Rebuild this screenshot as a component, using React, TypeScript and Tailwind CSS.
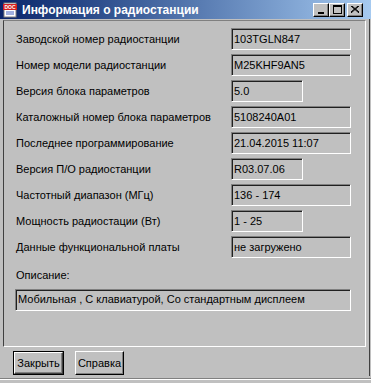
import type { ReactNode } from "react";

type Row = { label: string; value: string; wide: boolean };

const rows: Row[] = [
  { label: "Заводской номер радиостанции", value: "103TGLN847", wide: true },
  { label: "Номер модели радиостанции", value: "M25KHF9AN5", wide: true },
  { label: "Версия блока параметров", value: "5.0", wide: false },
  { label: "Каталожный номер блока параметров", value: "5108240A01", wide: true },
  { label: "Последнее программирование", value: "21.04.2015 11:07", wide: true },
  { label: "Версия П/О радиостанции", value: "R03.07.06", wide: false },
  { label: "Частотный диапазон (МГц)", value: "136 - 174", wide: true },
  { label: "Мощность радиостации (Вт)", value: "1 - 25", wide: false },
  { label: "Данные функциональной платы", value: "не загружено", wide: true },
];

// sunken read-only field, classic 3D look
function Field({ children, className }: { children: ReactNode; className?: string }) {
  return (
    <div
      className={`flex h-[22px] items-center border border-t-[#808080] border-l-[#808080] border-r-white border-b-white pl-[2px] shadow-[inset_1px_1px_0_#202020] text-[11px] text-black whitespace-nowrap ${className ?? ""}`}
    >
      {children}
    </div>
  );
}

function CaptionButton({ children }: { children: ReactNode }) {
  return (
    <div className="flex h-[14px] w-[16px] items-center justify-center bg-[#c0c0c0] border border-t-white border-l-white border-r-black border-b-black shadow-[inset_-1px_-1px_0_#808080]">
      {children}
    </div>
  );
}

function DocIcon() {
  return (
    <svg width="16" height="16" viewBox="0 0 16 16">
      <rect x="2" y="1" width="12" height="14" fill="#ffffff" stroke="#808080" />
      <rect x="1" y="2" width="14" height="6" fill="#d42020" />
      <text x="8" y="7" fontSize="5" fontWeight="bold" fill="#ffffff" textAnchor="middle" fontFamily="Liberation Sans, sans-serif">
        DOC
      </text>
      <line x1="4" y1="10" x2="12" y2="10" stroke="#4060c0" />
      <line x1="4" y1="12" x2="12" y2="12" stroke="#4060c0" />
    </svg>
  );
}

export default function App() {
  return (
    <div className="flex h-[383px] w-[371px] flex-col overflow-hidden bg-[#c0c0c0] font-['Liberation_Sans',Arial,sans-serif] select-none">
      {/* Title bar */}
      <div className="flex h-[19px] items-center bg-gradient-to-r from-[#0a246a] to-[#a6caf0] pl-[2px] pr-[8px]">
        <DocIcon />
        <span className="ml-[4px] text-[12px] font-bold text-white">Информация о радиостанции</span>
        <div className="ml-auto flex items-center">
          <CaptionButton>
            <svg width="8" height="8" viewBox="0 0 8 8">
              <rect x="1" y="6" width="6" height="2" fill="#000" />
            </svg>
          </CaptionButton>
          <CaptionButton>
            <svg width="9" height="9" viewBox="0 0 9 9">
              <rect x="0.5" y="0.5" width="8" height="8" fill="none" stroke="#000" />
              <rect x="0" y="1" width="9" height="1" fill="#000" />
            </svg>
          </CaptionButton>
          <div className="ml-[2px]">
            <CaptionButton>
              <svg width="8" height="7" viewBox="0 0 8 7">
                <path d="M0 0 L8 7 M8 0 L0 7 M1 0 L8 6 M7 0 L0 6" stroke="#000" strokeWidth="1" />
              </svg>
            </CaptionButton>
          </div>
        </div>
      </div>

      {/* Body */}
      <div className="flex flex-1 flex-col border-r border-[#404040] w-[370px]">
        {/* Info panel */}
        <div className="mx-[3px] mt-[1px] flex h-[327px] w-[363px] flex-col border border-t-[#808080] border-l-[#404040] border-r-white border-b-white pl-[12px] pt-[7px]">
          <div className="flex flex-col gap-[4px]">
            {rows.map((r) => (
              <div key={r.label} className="flex items-center">
                <span className="w-[215px] text-[11px] text-black whitespace-nowrap">{r.label}</span>
                <Field className={r.wide ? "w-[120px]" : "w-[72px]"}>{r.value}</Field>
              </div>
            ))}
          </div>
          <span className="mt-[9px] text-[11px] text-black">Описание:</span>
          <Field className="mt-[5px] w-[336px] h-[21px] -ml-[1px]">
            Мобильная , С клавиатурой, Со стандартным дисплеем
          </Field>
        </div>

        {/* Buttons */}
        <div className="mt-[4px] flex gap-[11px] pl-[13px]">
          <button className="h-[24px] w-[51px] border border-black bg-[#c0c0c0] text-[11px] text-black">
            <div className="flex h-full w-full items-center justify-center border border-t-white border-l-white border-r-[#404040] border-b-[#404040] shadow-[inset_-1px_-1px_0_#808080]">
              Закрыть
            </div>
          </button>
          <button className="flex h-[24px] w-[49px] items-center justify-center border border-t-white border-l-white border-r-black border-b-black bg-[#c0c0c0] shadow-[inset_-1px_-1px_0_#808080] text-[11px] text-black">
            Справка
          </button>
        </div>
      </div>

      {/* Bottom edge */}
      <div className="mt-[2px] h-[5px] border-t border-[#808080] shadow-[inset_0_1px_0_#ffffff]" />
    </div>
  );
}
